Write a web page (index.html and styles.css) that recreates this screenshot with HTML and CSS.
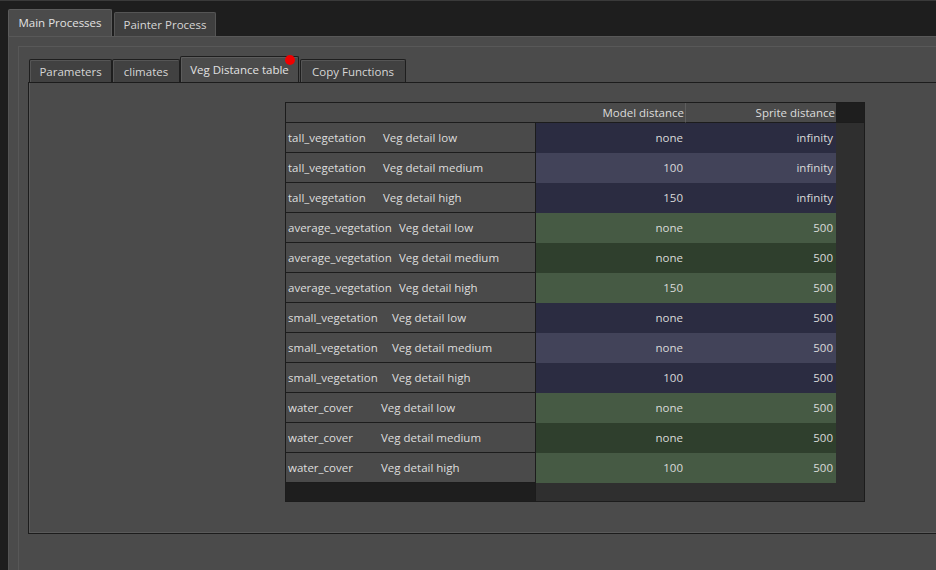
FILE: index.html
```html
<!DOCTYPE html>
<html>
<head>
<meta charset="utf-8">
<link rel="stylesheet" href="styles.css">
</head>
<body>
<div class="window">
  <div class="outer-bar">
    <div class="otab otab-main active">Main Processes</div>
    <div class="otab otab-painter">Painter Process</div>
  </div>
  <div class="outer-pane">
    <div class="frame">
      <div class="inner-bar">
        <div class="itab itab-params">Parameters</div>
        <div class="itab itab-climates">climates</div>
        <div class="itab itab-veg active">Veg Distance table<span class="dot"></span></div>
        <div class="itab itab-copy">Copy Functions</div>
      </div>
      <div class="inner-pane">
        <div class="table">
          <div class="hcorner"></div>
          <div class="hcell hcell-sep">Model distance</div>
          <div class="hcell">Sprite distance</div>
          <div class="hfill"></div>

          <div class="vh"><span class="k k-tall">tall_vegetation</span>Veg detail low</div>
          <div class="cell blue-a">none</div><div class="cell blue-a">infinity</div><div class="rfill"></div>
          <div class="vh"><span class="k k-tall">tall_vegetation</span>Veg detail medium</div>
          <div class="cell blue-b">100</div><div class="cell blue-b">infinity</div><div class="rfill"></div>
          <div class="vh"><span class="k k-tall">tall_vegetation</span>Veg detail high</div>
          <div class="cell blue-a">150</div><div class="cell blue-a">infinity</div><div class="rfill"></div>

          <div class="vh"><span class="k k-avg">average_vegetation</span>Veg detail low</div>
          <div class="cell green-a">none</div><div class="cell green-a">500</div><div class="rfill"></div>
          <div class="vh"><span class="k k-avg">average_vegetation</span>Veg detail medium</div>
          <div class="cell green-b">none</div><div class="cell green-b">500</div><div class="rfill"></div>
          <div class="vh"><span class="k k-avg">average_vegetation</span>Veg detail high</div>
          <div class="cell green-a">150</div><div class="cell green-a">500</div><div class="rfill"></div>

          <div class="vh"><span class="k k-small">small_vegetation</span>Veg detail low</div>
          <div class="cell blue-a">none</div><div class="cell blue-a">500</div><div class="rfill"></div>
          <div class="vh"><span class="k k-small">small_vegetation</span>Veg detail medium</div>
          <div class="cell blue-b">none</div><div class="cell blue-b">500</div><div class="rfill"></div>
          <div class="vh"><span class="k k-small">small_vegetation</span>Veg detail high</div>
          <div class="cell blue-a">100</div><div class="cell blue-a">500</div><div class="rfill"></div>

          <div class="vh"><span class="k k-water">water_cover</span>Veg detail low</div>
          <div class="cell green-a">none</div><div class="cell green-a">500</div><div class="rfill"></div>
          <div class="vh"><span class="k k-water">water_cover</span>Veg detail medium</div>
          <div class="cell green-b">none</div><div class="cell green-b">500</div><div class="rfill"></div>
          <div class="vh"><span class="k k-water">water_cover</span>Veg detail high</div>
          <div class="cell green-a">100</div><div class="cell green-a">500</div><div class="rfill"></div>

          <div class="vfill"></div>
          <div class="bfill"></div>
        </div>
      </div>
    </div>
  </div>
</div>
</body>
</html>
```

FILE: styles.css
```css
* { box-sizing: border-box; }

html, body {
  margin: 0;
  height: 570px;
  overflow: hidden;
}

body {
  background: #1e1e1e;
  border-top: 1px solid #3a3a3a;
  font-family: "Segoe UI", "Open Sans", "Noto Sans", sans-serif;
  font-size: 11.5px;
  color: #dcdcdc;
}

.window {
  padding-left: 8px;
  overflow: hidden;
}

/* outer tabs */
.outer-bar {
  display: flex;
  align-items: flex-end;
  gap: 2px;
  height: 35px;
}

.otab {
  display: flex;
  align-items: center;
  justify-content: center;
  height: 24px;
  background: #3f3f3f;
  border: 1px solid #555;
  border-bottom: none;
  border-radius: 2px 2px 0 0;
  color: #d6d6d6;
}

.otab.active {
  height: 27px;
  background: #4b4b4b;
  border-color: #5c5c5c;
  color: #e2e2e2;
  padding-bottom: 1px;
}

.otab-main { width: 104px; }
.otab-painter { width: 102px; }

.outer-pane {
  background: #4b4b4b;
  border-top: 1px solid #585858;
  border-left: 1px solid #555;
  padding: 9px 0 0 9px;
  height: 534px;
}

.frame {
  border-top: 1px solid #585858;
  border-left: 1px solid #575757;
  padding: 9px 0 0 9px;
  height: 100%;
}

/* inner tabs */
.inner-bar {
  display: flex;
  align-items: flex-end;
  height: 26px;
  padding-left: 1px;
}

.itab {
  position: relative;
  display: flex;
  align-items: center;
  justify-content: center;
  height: 23px;
  background: #414141;
  border: 1px solid #1e1e1e;
  border-bottom: none;
  border-radius: 2px 2px 0 0;
  box-shadow: inset 1px 1px 0 #555;
  color: #d6d6d6;
}

.itab.active {
  height: 26px;
  background: #4b4b4b;
  box-shadow: inset 1px 1px 0 #5c5c5c;
  color: #e2e2e2;
  padding-bottom: 1px;
}

.itab-params { width: 83px; }
.itab-climates { width: 68px; }
.itab-veg { width: 119px; }
.itab-copy { width: 106px; margin-left: 1px; }

.dot {
  position: absolute;
  left: 104px;
  top: -2px;
  width: 10px;
  height: 10px;
  border-radius: 50%;
  background: #f00000;
}

.inner-pane {
  height: 452px;
  background: #4b4b4b;
  border: 1px solid #1c1c1c;
  border-right: none;
  box-shadow: inset 1px 0 0 #5a5a5a, inset 0 -1px 0 #5a5a5a;
  padding: 19px 0 0 256px;
}

/* table */
.table {
  width: 580px;
  height: 400px;
  border: 1px solid #1c1c1c;
  background: #2f2f2f;
  display: grid;
  grid-template-columns: 250px 150px 150px 28px;
  grid-template-rows: 20px repeat(12, 30px) 1fr;
}

.hcorner {
  background: #4a4a4a;
  border-bottom: 1px solid #1c1c1c;
}

.hcell {
  background: #4a4a4a;
  border-bottom: 1px solid #1c1c1c;
  text-align: right;
  padding: 1px 1px 0 0;
  line-height: 18px;
  color: #dcdcdc;
}

.hcell-sep {
  border-right: 1px solid #5e5e5e;
}

.hfill {
  background: #1e1e1e;
  border-bottom: 1px solid #1c1c1c;
}

.vh {
  background: #4a4a4a;
  border-bottom: 1px solid #1c1c1c;
  border-right: 1px solid #1c1c1c;
  padding: 1px 0 0 2px;
  line-height: 28px;
  white-space: nowrap;
  color: #dedede;
}

.k { display: inline-block; }
.k-tall { width: 95px; }
.k-avg { width: 111px; }
.k-small { width: 104px; }
.k-water { width: 93px; }

.cell {
  text-align: right;
  padding: 0 3px 0 0;
  line-height: 30px;
  color: #dadada;
}

.blue-a { background: #2b2c41; }
.blue-b { background: #424359; }
.green-a { background: #465a44; }
.green-b { background: #2f3f2d; }

.rfill { background: #2f2f2f; }

.vfill {
  background: #1e1e1e;
  border-right: 1px solid #1c1c1c;
}

.bfill {
  grid-column: span 3;
  background: #2f2f2f;
}
```
